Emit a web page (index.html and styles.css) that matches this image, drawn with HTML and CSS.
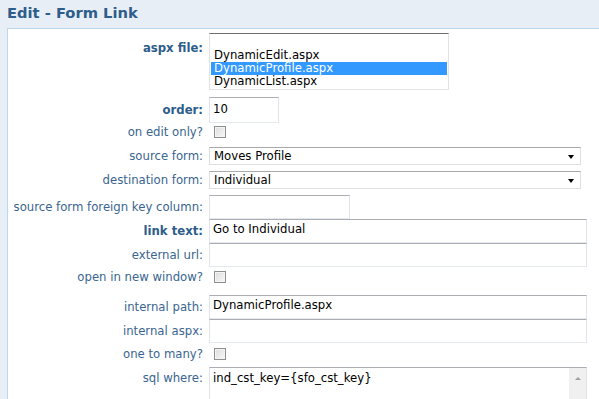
FILE: index.html
```html
<!DOCTYPE html>
<html>
<head>
<meta charset="utf-8">
<link rel="stylesheet" href="styles.css">
</head>
<body>
<div class="header"><h1 class="title">Edit - Form Link</h1></div>
<div class="panel">
  <div class="row row-list">
    <div class="label bold">aspx file:</div>
    <div class="listbox">
      <div class="opt">&nbsp;</div>
      <div class="opt">DynamicEdit.aspx</div>
      <div class="opt sel">DynamicProfile.aspx</div>
      <div class="opt">DynamicList.aspx</div>
    </div>
  </div>
  <div class="row row-order">
    <div class="label bold">order:</div>
    <div class="input w-order tall">10</div>
  </div>
  <div class="row row-chk row-chk1">
    <div class="label">on edit only?</div>
    <span class="check"></span>
  </div>
  <div class="row row-sel1">
    <div class="label">source form:</div>
    <div class="select">Moves Profile<span class="arrow"></span></div>
  </div>
  <div class="row row-sel2">
    <div class="label">destination form:</div>
    <div class="select">Individual<span class="arrow"></span></div>
  </div>
  <div class="row row-fk">
    <div class="label">source form foreign key column:</div>
    <div class="input w-fk"></div>
  </div>
  <div class="row">
    <div class="label bold">link text:</div>
    <div class="input w-full">Go to Individual</div>
  </div>
  <div class="row">
    <div class="label">external url:</div>
    <div class="input w-full"></div>
  </div>
  <div class="row row-chk row-chk2">
    <div class="label">open in new window?</div>
    <span class="check"></span>
  </div>
  <div class="row row-path">
    <div class="label">internal path:</div>
    <div class="input w-full">DynamicProfile.aspx</div>
  </div>
  <div class="row">
    <div class="label">internal aspx:</div>
    <div class="input w-full"></div>
  </div>
  <div class="row row-chk row-chk3">
    <div class="label">one to many?</div>
    <span class="check"></span>
  </div>
  <div class="row row-sql">
    <div class="label">sql where:</div>
    <div class="textarea">
      <div class="ta-text">ind_cst_key={sfo_cst_key}</div>
      <div class="scroll"><span class="up"></span></div>
    </div>
  </div>
</div>
</body>
</html>
```
FILE: styles.css
```css
html, body {
  margin: 0;
  padding: 0;
  height: 100%;
  overflow: hidden;
}
body {
  background: #e8eef5;
  font-family: "DejaVu Sans", Verdana, sans-serif;
  font-size: 11.7px;
  color: #000;
}
.header {
  height: 28px;
  padding-left: 7px;
}
.title {
  margin: 0;
  font-size: 14.7px;
  font-weight: bold;
  line-height: 25px;
  color: #2d5d8b;
}
.panel {
  margin-left: 7px;
  border-left: 1px solid #bcd8ee;
  border-top: 1px solid #bcd8ee;
  background: #fff;
  height: 400px;
}
.row {
  display: flex;
  align-items: center;
}
.label {
  width: 195px;
  padding-right: 6px;
  text-align: right;
  color: #3a6590;
  line-height: 14px;
  flex: none;
}
.bold { font-weight: bold; color: #2d5d8b; }
.row-list { align-items: flex-start; padding-top: 4px; }
.row-list .label { padding-top: 8px; }
.listbox {
  width: 236px;
  height: 53px;
  border: 1px solid #e3e3e3;
  border-top-color: #6e6e6e;
  padding: 2px 1px 0 1px;
  box-sizing: content-box;
  overflow: hidden;
}
.opt {
  height: 13px;
  line-height: 13px;
  padding-left: 3px;
  white-space: nowrap;
}
.opt.sel { background: #3399ff; color: #fff; }
.row-order { padding-top: 7px; }
.input {
  box-sizing: border-box;
  height: 24px;
  border: 1px solid #e2e3ea;
  border-top-color: #abadb3;
  border-bottom-color: #e3e9ef;
  padding: 0 3px;
  line-height: 19px;
  white-space: nowrap;
  background: #fff;
}
.input.tall { height: 26px; line-height: 23px; }
.w-order { width: 70px; }
.w-fk { width: 141px; }
.w-full { width: 378px; }
.check {
  box-sizing: border-box;
  display: block;
  width: 12px;
  height: 12px;
  margin-left: 5px;
  border: 1px solid #8f8f8f;
  background: linear-gradient(135deg, #dcdcdc, #f8f8f8);
  box-shadow: inset 0 0 0 1px #f4f4f4;
}
.row-chk { height: 12px; }
.row-chk .label { line-height: 12px; }
.row-chk1 { padding-top: 3px; }
.select {
  box-sizing: border-box;
  position: relative;
  width: 372px;
  height: 18px;
  border: 1px solid #dfdfdf;
  border-top-color: #a9a9a9;
  padding-left: 4px;
  line-height: 16px;
}
.arrow {
  position: absolute;
  right: 6px;
  top: 7px;
  width: 0;
  height: 0;
  border-left: 3.5px solid transparent;
  border-right: 3.5px solid transparent;
  border-top: 4px solid #000;
}
.row-sel1 { padding-top: 9px; }
.row-sel2 { padding-top: 6px; }
.row-fk { padding-top: 6px; }
.row-chk2 { padding-top: 4px; }
.row-path { padding-top: 12px; }
.row-chk3 { padding-top: 5px; }
.row-sql { padding-top: 7px; align-items: flex-start; }
.row-sql .label { padding-top: 4px; }
.textarea {
  box-sizing: border-box;
  display: flex;
  width: 378px;
  height: 60px;
  border: 1px solid #e2e3ea;
  border-top-color: #abadb3;
}
.ta-text {
  flex: 1;
  padding: 3px 3px;
  line-height: 14px;
}
.scroll {
  width: 17px;
  background: #f0f0f0;
  display: flex;
  justify-content: center;
  padding-top: 9px;
  box-sizing: border-box;
}
.up {
  width: 0;
  height: 0;
  border-left: 3px solid transparent;
  border-right: 3px solid transparent;
  border-bottom: 3px solid #a0a0a0;
}
```
